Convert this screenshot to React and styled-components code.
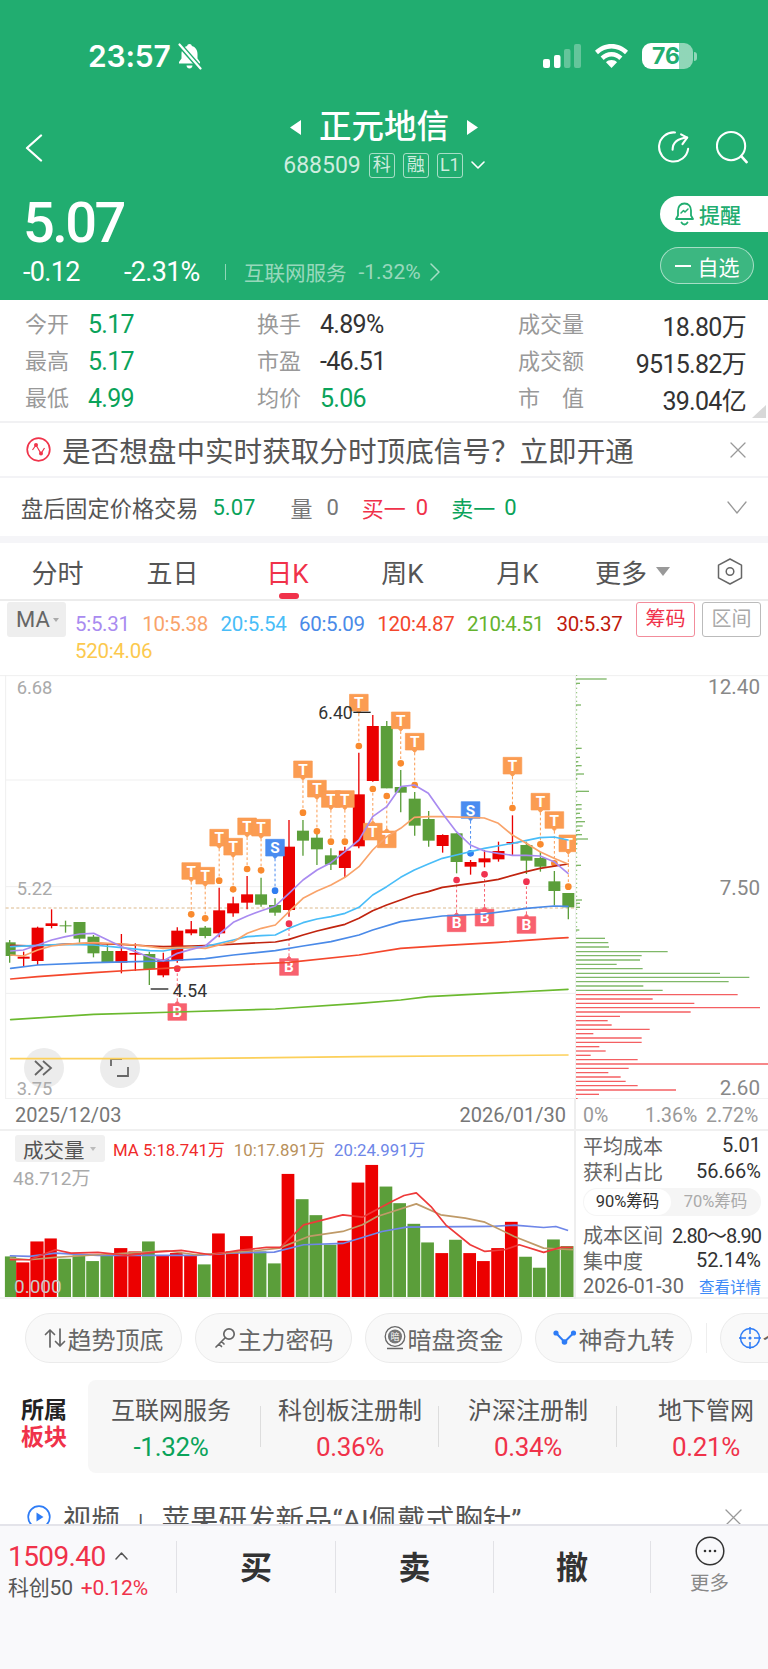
import React from 'react';
import styled, { createGlobalStyle } from 'styled-components';

const GREEN = '#0aa35a';
const RED = '#f0324a';
const CANDLE_RED = '#ea0000';
const CANDLE_GREEN = '#5b9e3a';

const Global = createGlobalStyle`
  html, body { margin: 0; padding: 0; background: #fff; }
  body { font-family: Roboto, "Noto Sans CJK SC", sans-serif; color: #333; }
  * { box-sizing: border-box; }
`;

const Page = styled.div`
  width: 768px; height: 1669px; display: flex; flex-direction: column; overflow: hidden; background: #fff;
`;
const Scroll = styled.div`flex: 1; min-height: 0; overflow: hidden;`;

/* header */
const Header = styled.header`height: 300px; background: #21ad70; color: #fff; display: flex; flex-direction: column;`;
const StatusRow = styled.div`
  margin-top: 41px; height: 30px; padding: 0 71px 0 88px; display: flex; align-items: center; justify-content: space-between;
`;
const TimeGroup = styled.div`display: flex; align-items: center; gap: 6px;`;
const Time = styled.span`font-family: Inter, sans-serif; font-weight: 600; font-size: 30px; letter-spacing: -0.2px;`;
const StatusIcons = styled.div`display: flex; align-items: center; gap: 14px;`;
const BatteryWrap = styled.div`display: flex; align-items: center; gap: 1px;`;
const BatteryBody = styled.div`
  width: 51px; height: 26px; border-radius: 9px; background: linear-gradient(90deg, #fff 72%, rgba(255,255,255,.5) 72%);
  color: #21ad70; font-family: Inter, sans-serif; font-weight: 700; font-size: 23px; line-height: 26px; text-align: center; padding-right: 3px;
`;
const BatteryTip = styled.div`width: 3px; height: 9px; border-radius: 0 3px 3px 0; background: rgba(255,255,255,.5);`;

const NavRow = styled.div`margin-top: 39px; height: 68px; display: grid; grid-template-columns: 110px 1fr 110px;`;
const BackCell = styled.div`padding: 24px 0 0 25px;`;
const TitleCell = styled.div`display: flex; flex-direction: column; align-items: center;`;
const TitleLine = styled.div`display: flex; align-items: center; gap: 18px; height: 34px;`;
const Title = styled.h1`margin: 0; font-size: 32.5px; font-weight: 500; line-height: 34px; letter-spacing: 0;`;
const CodeLine = styled.div`display: flex; align-items: center; height: 26px; margin-top: 8px; color: rgba(255,255,255,.78);`;
const Code = styled.span`font-size: 23px; letter-spacing: 0; margin-right: 8px;`;
const Tag = styled.span`
  width: 26px; height: 25px; border: 1px solid rgba(255,255,255,.6); border-radius: 3px; font-size: 18px; line-height: 22px; text-align: center; margin-right: 8px;
`;
const NavIcons = styled.div`display: flex; justify-content: flex-end; gap: 26px; padding: 20px 20px 0 0;`;

const PriceRow = styled.div`margin-top: 18px; display: flex; justify-content: space-between; flex: 1;`;
const PriceCol = styled.div`padding: 2px 0 0 23px;`;
const BigPrice = styled.div`font-size: 56px; line-height: 50px; font-weight: 500; letter-spacing: -2.6px;`;
const MoveLine = styled.div`display: flex; align-items: center; margin-top: 9px; height: 30px;`;
const Move = styled.span`font-size: 27px; letter-spacing: -.7px; width: ${p => p.$w}px;`;
const MoveSep = styled.span`width: 1px; height: 16px; background: rgba(255,255,255,.5); margin-right: 18px;`;
const Industry = styled.span`font-size: 20.5px; color: rgba(255,255,255,.55); margin-right: 12px;`;
const IndustryVal = styled.span`font-size: 21px; color: rgba(255,255,255,.55); margin-right: 9px;`;
const ActionCol = styled.div`width: 108px; display: flex; flex-direction: column;`;
const AlertBtn = styled.div`
  height: 36px; background: #fff; color: #21ad70; border-radius: 18px 0 0 18px; display: flex; align-items: center; padding-left: 15px; gap: 5px; font-size: 21px; font-weight: 500;
`;
const WatchBtn = styled.div`
  margin-top: 15px; width: 94px; height: 37px; border: 1px solid rgba(255,255,255,.55); border-radius: 18.5px; background: rgba(255,255,255,.12);
  display: flex; align-items: center; justify-content: center; gap: 7px; font-size: 21px;
`;
const Dash = styled.span`width: 16px; height: 2px; background: #fff;`;

/* stats */
const Stats = styled.section`
  position: relative; height: 123px; padding: 5px 22px 0 25px; display: grid; grid-template-columns: 232px 261px 1fr; grid-auto-rows: 37px; border-bottom: 2px solid #f1f1f3;
`;
const StatCell = styled.div`display: flex; align-items: center; justify-content: ${p => (p.$wide ? 'space-between' : 'flex-start')};`;
const StatLabel = styled.span`font-size: 22px; color: #999; margin-top: -4px; width: ${p => (p.$wide ? 'auto' : '63px')};`;
const StatValue = styled.span`font-size: 25px; letter-spacing: -.7px; margin-top: 2px; color: ${p => p.$color || '#333'};`;
const Corner = styled.div`
  position: absolute; right: 2px; bottom: 3px; width: 0; height: 0; border-style: solid; border-width: 0 0 13px 14px; border-color: transparent transparent #d8d8d8 transparent;
`;

/* banners */
const Notice = styled.div`height: 55px; display: flex; align-items: center; padding: 0 22px 0 26px; border-bottom: 2px solid #f3f3f6;`;
const NoticeText = styled.span`flex: 1; font-size: 28.6px; color: #555; margin-left: 11px; white-space: nowrap;`;
const AfterRow = styled.div`height: 58px; display: flex; align-items: center; padding: 0 21px; border-radius: 0 0 6px 6px;`;
const AfterLabel = styled.span`font-size: 22.2px; color: #555;`;
const AfterValue = styled.span`font-size: 22px; color: ${p => p.$color || '#777'}; margin-left: ${p => p.$ml || 0}px;`;
const AfterSpacer = styled.span`flex: 1;`;
const Gap = styled.div`height: 7px; background: #f5f5f8;`;

/* tabs */
const Tabs = styled.nav`height: 58px; display: grid; grid-template-columns: repeat(6, 115px) 1fr; border-bottom: 2px solid #ececec;`;
const Tab = styled.div`
  position: relative; display: flex; align-items: center; justify-content: center; gap: 9px; font-size: 26px; color: ${p => (p.$active ? RED : '#555')};
  &::after { content: ''; display: ${p => (p.$active ? 'block' : 'none')}; position: absolute; left: 50%; margin-left: -9px; bottom: 0; width: 20px; height: 6px; border-radius: 3px; background: ${RED}; }
`;
const Caret = styled.span`
  width: 0; height: 0; border-style: solid; border-width: ${p => p.$s * 0.9}px ${p => p.$s * 0.7}px 0; border-color: ${p => p.$c || '#999'} transparent transparent;
`;
const HexCell = styled.div`display: flex; align-items: center; padding-left: 27px;`;

/* ma row */
const MaRow = styled.div`height: 74px; display: flex; padding: 1px 7px 0;`;
const MaSelect = styled.div`
  width: 59px; height: 35px; border-radius: 3px; background: #eee; display: flex; align-items: center; padding-left: 9px; gap: 3px; font-size: 22px; color: #666; flex: none;
`;
const Legend = styled.div`flex: none; width: 570px; display: flex; flex-wrap: wrap; align-content: flex-start; padding: 9px 0 0 9px; column-gap: 12.5px;`;
const LegendItem = styled.span`font-size: 20.5px; letter-spacing: -.3px; line-height: 27px; color: ${p => p.$c}; white-space: nowrap;`;
const MaBtns = styled.div`display: flex; gap: 7px; flex: none;`;
const MaBtn = styled.div`
  width: 59px; height: 35px; border-radius: 3px; border: 1px solid ${p => (p.$on ? '#f28c9b' : '#bbb')}; color: ${p => (p.$on ? RED : '#aaa')};
  font-size: 20px; line-height: 33px; text-align: center;
`;

/* chart */
const ChartRow = styled.div`position: relative; height: 424px; display: grid; grid-template-columns: 576px 192px;`;
const PriceSvg = styled.svg`display: block; position: relative; z-index: 1;`;
const CircleBtn = styled.div`
  position: absolute; z-index: 0; left: ${p => p.$x - 20}px; top: 373px; width: 40px; height: 40px; border-radius: 50%; background: #ececec; display: flex; align-items: center; justify-content: center;
`;
const AxisText = styled.text`font-size: ${p => p.$s || 55}px; fill: ${p => p.$c || '#aaa'}; dominant-baseline: central;`;
const MarkLetter = styled.text`font-size: 46px; font-weight: 700; fill: #fff; text-anchor: middle; dominant-baseline: central;`;

const DateRow = styled.div`
  height: 32px; display: grid; grid-template-columns: 576px 1fr; border-bottom: 2px solid #f0f0f0; font-size: 20px; color: #777;
`;
const DateLeft = styled.div`display: flex; align-items: center; justify-content: space-between; padding: 2px 8px 0 15px; border-right: 2px solid #eee;`;
const DateRight = styled.div`display: flex; align-items: center; padding: 2px 14px 0 7px; color: #999; font-size: 19.5px;`;
const Pct = styled.span`width: ${p => p.$w}px;`;

const VolRow = styled.div`height: 168px; display: grid; grid-template-columns: 576px 1fr; border-bottom: 2px solid #f3f3f3;`;
const VolPane = styled.div`position: relative; border-right: 2px solid #eee;`;
const VolSvg = styled.svg`display: block;`;
const VolSelect = styled.div`
  position: absolute; left: 15px; top: 4px; width: 90px; height: 27px; background: #f0f0f0; border-radius: 3px; display: flex; align-items: center; padding-left: 8px; gap: 5px; font-size: 20.5px; color: #555;
`;
const VolLegend = styled.div`position: absolute; left: 113px; top: 8px; display: flex; gap: 9px; font-size: 16.8px; line-height: 22px; white-space: nowrap;`;
const VolItem = styled.span`color: ${p => p.$c};`;
const VolMax = styled.div`position: absolute; left: 13px; top: 36px; font-size: 19px; line-height: 24px; color: #aaa;`;
const VolMin = styled.div`position: absolute; left: 14px; top: 144px; font-size: 19px; line-height: 24px; color: #c8c8c8;`;

const CostPane = styled.div`padding: 1px 7px 0 7px; display: flex; flex-direction: column;`;
const CostLine = styled.div`height: 26px; display: flex; align-items: center; justify-content: space-between; font-size: 20px; color: #666; white-space: nowrap;`;
const CostValue = styled.span`color: #333; font-size: 20px; letter-spacing: ${p => p.$ls || 0}px;`;
const CostLink = styled.span`color: #3d8af7; font-size: 15.5px;`;
const Toggle = styled.div`height: 28px; margin: 4px 0 5px; border-radius: 14px; background: #f5f5f5; display: grid; grid-template-columns: 87px 1fr; font-size: 16.5px; text-align: center; line-height: 26px; color: #aaa; padding: 1px;`;
const ToggleOn = styled.div`background: #fff; border-radius: 13px; color: #333;`;
const ToggleOff = styled.div``;

/* pills */
const Pills = styled.div`margin-top: 14px; height: 50px; display: flex; padding-left: 25px; gap: 13px; overflow: hidden;`;
const Pill = styled.div`
  flex: none; width: 157px; height: 50px; border-radius: 25px; border: 1px solid #ebebeb; background: #f9f9f9; display: flex; align-items: center; justify-content: center; gap: 2px; font-size: 24px; color: #666; white-space: nowrap;
`;
const PillDivider = styled.div`flex: none; width: 1px; height: 30px; background: #eee; margin: 10px 0 0 1px;`;

/* sectors */
const SectorRow = styled.div`margin-top: 17px; height: 93px; display: flex;`;
const SectorTitle = styled.div`flex: none; width: 88px; padding: 17px 0 0 21px; font-size: 23px; font-weight: 700; line-height: 27px; color: #222;`;
const SectorRed = styled.div`color: ${RED};`;
const SectorList = styled.div`flex: 1; display: flex; overflow: hidden; background: #f7f7f7; border-radius: 8px 0 0 8px;`;
const SectorCell = styled.div`
  position: relative; flex: none; width: ${p => (p.$first ? 173 : 178)}px; padding: 16px ${p => (p.$first ? 7 : 0)}px 0 0; text-align: center;
  &::after { content: ''; position: absolute; right: 0; top: 26px; height: 41px; width: 1px; background: #ddd; }
`;
const SectorName = styled.div`font-size: 24px; line-height: 30px; color: #555; white-space: nowrap;`;
const SectorVal = styled.div`font-size: 26px; letter-spacing: -.3px; line-height: 30px; margin-top: 6px; color: ${p => p.$c};`;

/* video */
const VideoRow = styled.div`margin-top: 24px; height: 40px; display: flex; align-items: center; padding: 0 26px 0 27px;`;
const VideoText = styled.span`flex: 1; font-size: 28.5px; color: #555; margin-left: 12px; white-space: nowrap;`;
const VideoSep = styled.span`font-size: 22px; margin: 0 18px; color: #555;`;

/* bottom */
const Bottom = styled.footer`flex: none; height: 145px; background: #f9f9fb; border-top: 2px solid #e4e4ea; padding-top: 15px; display: grid; grid-template-columns: 176px 159px 158px 157px 1fr; grid-auto-rows: 52px;`;
const IndexCell = styled.div`padding-left: 8px; display: flex; flex-direction: column;`;
const IndexTop = styled.div`display: flex; align-items: center; gap: 9px; height: 32px; margin-top: -1px;`;
const IndexPrice = styled.span`font-size: 28px; letter-spacing: -.6px; color: ${RED};`;
const IndexBottom = styled.div`display: flex; gap: 8px; margin-top: 3px; font-size: 21px; letter-spacing: -.2px; line-height: 26px; color: #555; white-space: nowrap;`;
const IndexChange = styled.span`color: ${RED};`;
const TradeBtn = styled.div`border-left: 1px solid #e2e2e6; padding-bottom: 5px; display: flex; align-items: center; justify-content: center; font-size: 32px; font-weight: 700; color: #333;`;
const MoreBtn = styled.div`border-left: 1px solid #e2e2e6; display: flex; flex-direction: column; align-items: center; font-size: 19.5px; color: #888; height: 52px;`;
const MoreIcon = styled.div`height: 30px; margin-top: -5px;`;
const MoreText = styled.span`line-height: 24px; margin-top: 6px;`;

/* chart data, in 3x chart coordinates */
const px = i => 29 + 41.9 * i;
const C = [
  ['g',817,858,810,878],['r',860,866,845,888],['r',773,873,770,885],['r',760,768,718,775],['g',766,769,752,788],
  ['g',756,806,756,818],['g',800,850,795,862],['g',843,876,820,878],['r',843,878,792,910],['r',849,854,820,903],
  ['g',852,898,845,945],['r',868,916,848,922],['r',782,872,772,878],['r',778,790,753,796],['g',773,798,768,805],
  ['r',721,790,653,802],['r',700,730,680,740],['r',673,698,618,718],['g',673,704,623,710],['g',705,728,685,737],
  ['r',530,720,450,740],['g',482,512,450,557],['g',503,538,478,585],['g',556,584,535,600],['r',542,594,530,622],
  ['r',373,529,248,535],['r',168,333,135,335],['g',168,355,153,355],['g',351,368,300,427],['g',386,467,366,497],
  ['g',447,512,423,530],['r',495,528,493,548],['g',490,576,490,610],['r',576,590,570,614],['r',565,577,540,592],
  ['r',543,568,515,575],['r',516,520,436,555],['g',525,572,515,612],['g',564,590,545,605],['g',634,663,603,706],
  ['g',669,712,669,748],
];
const TOP_MARKS = [
  [13,'T',578,733],[14,'T',592,745],[15,'T',478,632],[16,'T',505,658],[17,'T',444,597],[18,'T',448,601],[19,'S',508,662],
  [21,'T',273,428],[22,'T',331,484],[23,'T',362,515],[24,'T',362,515],[25,'T',73,228],[28,'T',126,280],[29,'T',190,345],
  [33,'S',395,550],[36,'T',262,414],[38,'T',370,523],[39,'T',425,580],[40,'T',495,650],
];
const BELOW_MARKS = [
  [26,'T',452,357],[27,'T',475,378],[12,'B',993,896],[20,'B',858,761],[32,'B',727,630],[34,'B',710,613],[37,'B',732,635],
];
const MC = {
  T: ['#fb9c52', '#f98a2e'], S: ['#4a8cf0', '#2f7df0'], B: ['#f8616f', '#f0324f'],
};
const LINES = [
  ['#fcd05a', 5, [[32,1166],[532,1166],[1077,1160],[1704,1155]]],
  ['#6bb92f', 5, [[32,1049],[281,1033],[532,1026],[826,1017],[1077,1000],[1202,990],[1285,980],[1704,958]]],
  ['#f4472c', 5, [[32,927],[113,920],[281,908],[407,900],[532,893],[700,885],[867,877],[1077,855],[1202,835],[1327,827],[1495,817],[1662,805],[1704,803]]],
  ['#4a8ae8', 5, [[32,895],[113,885],[281,878],[407,875],[490,873],[616,866],[700,855],[826,842],[909,828],[993,815],[1077,795],[1118,780],[1202,755],[1327,738],[1453,732],[1579,715],[1662,708],[1704,709]]],
  ['#c0240f', 5, [[32,826],[113,828],[197,822],[281,820],[365,823],[449,828],[490,830],[574,828],[658,825],[742,820],[826,816],[867,808],[909,795],[951,783],[993,773],[1035,763],[1077,745],[1118,722],[1160,705],[1202,690],[1243,675],[1285,665],[1327,652],[1453,635],[1495,628],[1579,605],[1620,595],[1704,582]]],
  ['#49bdf8', 5, [[32,830],[113,826],[197,823],[281,825],[365,833],[449,842],[490,843],[532,835],[616,830],[700,810],[742,800],[784,797],[826,795],[867,775],[909,758],[951,747],[993,740],[1035,730],[1077,712],[1118,675],[1160,650],[1202,622],[1243,600],[1285,582],[1327,565],[1369,555],[1453,535],[1537,520],[1620,503],[1662,501],[1704,510]]],
  ['#f9a36a', 5, [[32,855],[70,858],[113,840],[155,828],[197,823],[239,820],[281,818],[323,820],[365,822],[407,825],[449,830],[490,835],[532,833],[574,832],[616,835],[658,825],[700,815],[742,790],[784,775],[826,765],[867,725],[909,685],[951,663],[993,645],[1035,622],[1077,590],[1118,540],[1160,500],[1202,475],[1243,442],[1285,440],[1327,440],[1411,442],[1453,444],[1495,460],[1537,495],[1579,520],[1620,545],[1662,565],[1704,582]]],
  ['#a98bf0', 5, [[32,843],[70,840],[113,825],[155,810],[197,800],[239,792],[281,790],[323,810],[365,830],[407,845],[449,862],[490,872],[532,850],[574,838],[616,828],[658,792],[700,757],[742,738],[784,722],[826,708],[867,670],[909,630],[951,600],[993,578],[1035,545],[1077,510],[1118,440],[1160,410],[1202,350],[1243,345],[1285,370],[1327,430],[1369,485],[1411,525],[1453,543],[1495,550],[1537,556],[1579,556],[1620,558],[1662,575],[1704,610]]],
];
const DIST_G = [[27,980],[40,900],[105,903],[235,905],[262,900],[275,895],[287,905],[300,895],[312,912],[325,892],[364,927],[404,905],[417,905],[430,900],[443,905],[455,915],[468,908],[481,900],[494,906],[507,924],[520,892],[586,903],[690,906],[700,900],[712,900],[780,898],[805,975],[818,985],[831,987],[845,1163],[857,1085],[870,1080],[883,1010],[896,1088],[910,1320],[922,1408],[935,1346],[948,1090],[961,1148]];
const DIST_R = [[974,1373],[987,1118],[1000,1243],[1013,1440],[1026,1232],[1039,1020],[1052,983],[1065,995],[1078,1109],[1091,940],[1104,1085],[1117,1085],[1130,958],[1143,977],[1156,932],[1169,1073],[1182,1464],[1195,1046],[1208,985],[1221,1022],[1234,1037],[1247,1073],[1260,1188],[1273,957],[1286,893]];
const VOL = [
  [10,33,500,'g'],[33,60,518,'r'],[62,89,455,'r'],[91,116,446,'r'],[119,145,507,'g'],[148,174,497,'g'],[176,202,514,'g'],[205,231,497,'g'],[233,260,475,'r'],[262,288,485,'r'],
  [290,316,455,'g'],[319,345,497,'r'],[347,373,490,'r'],[376,402,497,'r'],[404,430,524,'g'],[433,459,431,'r'],[461,487,485,'r'],[490,516,439,'r'],[518,544,485,'g'],[547,573,521,'g'],
  [575,601,252,'r'],[604,630,328,'g'],[632,658,376,'g'],[661,687,465,'g'],[689,715,453,'r'],[718,744,278,'r'],[746,772,225,'r'],[775,801,290,'g'],[803,829,340,'g'],[832,858,402,'g'],
  [860,886,458,'g'],[889,915,490,'r'],[917,943,450,'g'],[946,972,490,'r'],[974,1000,514,'r'],[1003,1029,475,'r'],[1031,1057,396,'r'],[1060,1086,501,'g'],[1088,1114,534,'g'],[1117,1143,449,'g'],[1145,1171,469,'g'],
];
const VOL_LINES = [
  ['#6e86e8', [[20,498],[60,500],[113,490],[200,497],[300,497],[400,497],[470,490],[560,487],[620,465],[700,461],[780,425],[830,412],[1000,410],[1050,406],[1110,413],[1135,410],[1160,422]]],
  ['#bf9a68', [[20,505],[60,510],[113,503],[200,495],[260,490],[340,483],[400,495],[460,490],[520,483],[570,475],[630,440],[700,425],[740,405],[770,380],[850,342],[900,375],[950,385],[990,397],[1050,440],[1110,475],[1170,480]]],
  ['#ee3a3a', [[20,510],[60,510],[113,480],[145,490],[200,488],[260,497],[316,487],[370,482],[430,495],[487,482],[544,473],[573,473],[620,405],[660,390],[700,375],[740,382],[800,335],[825,317],[850,309],[880,350],[910,405],[960,465],[990,485],[1030,480],[1060,465],[1110,488],[1145,473],[1170,473]]],
];

const Marker = ({ m, below }) => {
  const [i, kind, top, dot] = m;
  const x = px(i);
  const [fill, dotFill] = MC[kind];
  const y1 = below ? top : top + 58;
  const shape = below
    ? `M${x - 28} ${top + 8} H${x - 8} L${x} ${top} L${x + 8} ${top + 8} H${x + 28} V${top + 58} H${x - 28} Z`
    : `M${x - 28} ${top} H${x + 28} V${top + 50} H${x + 8} L${x} ${top + 58} L${x - 8} ${top + 50} H${x - 28} Z`;
  return (
    <g>
      <line x1={x} x2={x} y1={y1} y2={dot} stroke={fill} strokeWidth="3" strokeDasharray="8 7" />
      <circle cx={x} cy={dot} r="10" fill={dotFill} />
      <path d={shape} fill={fill} stroke={fill} strokeWidth="2" strokeLinejoin="round" />
      <MarkLetter x={x} y={below ? top + 33 : top + 27}>{kind}</MarkLetter>
    </g>
  );
};

const PriceChart = () => (
  <PriceSvg width="576" height="424" viewBox="0 15 1728 1272">
    <g stroke="#efefef" strokeWidth="3">
      <line x1="0" x2="1728" y1="17" y2="17" />
      <line x1="17" x2="17" y1="15" y2="1287" />
      {[330, 650, 970, 1286].map(y => <line key={y} x1="17" x2="1728" y1={y} y2={y} />)}
      <line x1="1727" x2="1727" y1="15" y2="1287" />
    </g>
    <line x1="17" x2="1728" y1="714" y2="714" stroke="#dcb98c" strokeWidth="3" strokeDasharray="9 7" />
    {C.map((c, i) => {
      const x = px(i);
      const col = c[0] === 'r' ? CANDLE_RED : CANDLE_GREEN;
      const bx = Math.max(17, x - 18);
      return (
        <g key={i}>
          <line x1={x} x2={x} y1={c[3]} y2={c[4]} stroke={col} strokeWidth="4" />
          <rect x={bx} y={c[1]} width={x + 18 - bx} height={c[2] - c[1]} fill={col} />
        </g>
      );
    })}
    {TOP_MARKS.map((m, i) => <Marker key={i} m={m} />)}
    {BELOW_MARKS.map((m, i) => <Marker key={i} m={m} below />)}
    {LINES.map((l, i) => (
      <polyline key={i} points={l[2].map(p => p.join(',')).join(' ')} fill="none" stroke={l[0]} strokeWidth={l[1]} strokeLinejoin="round" strokeLinecap="round" />
    ))}
    <AxisText x="50" y="52">6.68</AxisText>
    <AxisText x="50" y="655">5.22</AxisText>
    <AxisText x="50" y="1254">3.75</AxisText>
    <AxisText x="955" y="130" $c="#333" $s="53">6.40</AxisText>
    <line x1="1060" x2="1112" y1="127" y2="127" stroke="#222" strokeWidth="4" />
    <line x1="452" x2="505" y1="957" y2="957" stroke="#222" strokeWidth="4" />
    <AxisText x="518" y="962" $c="#333" $s="53">4.54</AxisText>
  </PriceSvg>
);

const DistChart = () => (
  <PriceSvg width="192" height="424" viewBox="888 15 576 1272">
    <line x1="888" x2="1464" y1="17" y2="17" stroke="#efefef" strokeWidth="3" />
    <line x1="888" x2="1464" y1="1286" y2="1286" stroke="#efefef" strokeWidth="3" />
    <g stroke="#6db24f" strokeWidth="3" strokeDasharray="4 9" opacity=".8">
      <line x1="890" x2="890" y1="14" y2="795" />
    </g>
    {DIST_G.map(([y, e], i) => <line key={i} x1="888" x2={e} y1={y} y2={y} stroke="#7fb868" strokeWidth="4" />)}
    {DIST_R.map(([y, e], i) => <line key={i} x1="888" x2={e} y1={y} y2={y} stroke="#f45f62" strokeWidth="4" />)}
    <AxisText x="1440" y="50" $c="#888" $s="62" textAnchor="end">12.40</AxisText>
    <AxisText x="1440" y="653" $c="#888" $s="62" textAnchor="end">7.50</AxisText>
    <AxisText x="1440" y="1255" $c="#888" $s="62" textAnchor="end">2.60</AxisText>
  </PriceSvg>
);

const VolChart = () => (
  <VolSvg width="574" height="166" viewBox="0 123 1172 499" preserveAspectRatio="none">
    {VOL.map(([a, b, t, c], i) => (
      <rect key={i} x={a} y={t} width={b - a} height={628 - t} fill={c === 'r' ? '#ec0000' : CANDLE_GREEN} />
    ))}
    {VOL_LINES.map((l, i) => (
      <polyline key={i} points={l[1].map(p => p.join(',')).join(' ')} fill="none" stroke={l[0]} strokeWidth="1.7" vectorEffect="non-scaling-stroke" strokeLinejoin="round" />
    ))}
  </VolSvg>
);

const BellSlash = () => (
  <svg width="25" height="27" viewBox="0 0 25 27" fill="#fff">
    <path d="M12.5 1c1.3 0 2.2 .9 2.4 2 3.6 1 5.6 4 5.6 8v4.5l2.5 3.5v1.5H2V19l2.5-3.5V11c0-4 2-7 5.6-8 .2-1.100 1.100-2 2.400-2z" />
    <path d="M9.500 22.500h6c-.2 1.800-1.400 3-3 3s-2.800-1.200-3-3z" />
    <path d="M2 1 L23.500 25.500" stroke="#21ad70" strokeWidth="5" />
    <path d="M2.500 1.500 L23.500 25.500" stroke="#fff" strokeWidth="2.200" strokeLinecap="round" />
  </svg>
);
const Signal = () => (
  <svg width="38" height="24" viewBox="0 0 38 24" fill="#fff">
    <rect x="0" y="15" width="7" height="9" rx="2" />
    <rect x="11" y="11" width="6.500" height="13" rx="2" />
    <rect x="21" y="5" width="6.500" height="19" rx="2" opacity=".3" />
    <rect x="31" y="0" width="7" height="24" rx="2" opacity=".3" />
  </svg>
);
const Wifi = () => (
  <svg width="33" height="24" viewBox="0 0 33 24" fill="#fff">
    <path d="M16.500 0C10 0 4.500 2.500 0 6.800l3 3.400C6.700 6.600 11.200 4.500 16.500 4.500s9.800 2.100 13.500 5.700l3-3.400C28.500 2.500 23 0 16.500 0z" />
    <path d="M16.500 8c-4.300 0-8 1.700-10.900 4.600l3.100 3.400c2.100-2.100 4.800-3.400 7.800-3.400s5.700 1.300 7.800 3.400l3.100-3.400C24.500 9.700 20.800 8 16.500 8z" />
    <path d="M16.500 16c-2.300 0-4.200 .9-5.500 2.200l5.500 5.800 5.500-5.800c-1.300-1.300-3.200-2.200-5.500-2.200z" />
  </svg>
);
const Back = () => (
  <svg width="18" height="28" viewBox="0 0 18 28" fill="none" stroke="#fff" strokeWidth="2.300" strokeLinecap="round" strokeLinejoin="round"><path d="M16 1.500 L2 14 L16 26.500" /></svg>
);
const Tri = ({ dir }) => (
  <svg width="11" height="15" viewBox="0 0 11 15" fill="#fff"><path d={dir === 'l' ? 'M11 0 V15 L0 7.500 Z' : 'M0 0 V15 L11 7.500 Z'} /></svg>
);
const Chevron = ({ w = 14, h = 8, c = '#fff', sw = 1.600 }) => (
  <svg width={w} height={h} viewBox={`0 0 ${w} ${h}`} fill="none" stroke={c} strokeWidth={sw} strokeLinecap="round" strokeLinejoin="round"><path d={`M1 1 L${w / 2} ${h - 1} L${w - 1} 1`} /></svg>
);
const Refresh = () => (
  <svg width="34" height="34" viewBox="0 0 34 34" fill="none" stroke="#fff" strokeWidth="2.200" strokeLinecap="round" strokeLinejoin="round">
    <path d="M18 1.500 A15.500 15.500 0 1 0 32 19" />
    <path d="M15.500 20 C15.500 12 21 8 31 7" />
    <path d="M24.500 3.500 L31 7 L26 14" />
  </svg>
);
const Search = () => (
  <svg width="34" height="34" viewBox="0 0 34 34" fill="none" stroke="#fff" strokeWidth="2.200" strokeLinecap="round">
    <circle cx="16" cy="16" r="15" />
    <path d="M27 27 L32.500 33" strokeWidth="2.800" />
  </svg>
);
const AlertBell = () => (
  <svg width="19" height="24" viewBox="0 0 19 24" fill="none" stroke="#21ad70" strokeWidth="1.800" strokeLinejoin="round" strokeLinecap="round">
    <path d="M9.500 1.500c4.300 0 6.500 3.200 6.500 7v5l2 3.500H1l2-3.500v-5c0-3.800 2.200-7 6.500-7z" />
    <path d="M6.500 20.500c.7 1.300 1.700 2 3 2s2.300-.7 3-2" />
    <path d="M6 11 L8.500 8.500 L10 10 L13 7" strokeWidth="1.500" />
  </svg>
);
const Arrow = ({ w, h, c = '#999', sw = 1.400, up }) => (
  <svg width={w} height={h} viewBox={`0 0 ${w} ${h}`} fill="none" stroke={c} strokeWidth={sw} strokeLinecap="round" strokeLinejoin="round"><path d={up ? `M1 ${h - 1} L${w / 2} 1 L${w - 1} ${h - 1}` : `M1 1 L${w - 1} ${h / 2} L1 ${h - 1}`} /></svg>
);
const Close = ({ s = 16, c = '#999' }) => (
  <svg width={s} height={s} viewBox={`0 0 ${s} ${s}`} stroke={c} strokeWidth="1.300" strokeLinecap="round"><path d={`M1 1 L${s - 1} ${s - 1} M${s - 1} 1 L1 ${s - 1}`} /></svg>
);
const Signals = () => (
  <svg width="25" height="25" viewBox="0 0 25 25" fill="none" stroke="#f0344b">
    <circle cx="12.500" cy="12.500" r="11.300" strokeWidth="1.700" />
    <path d="M6.500 13 L10 8 L15 16.500 L18.500 11" strokeWidth="1.200" />
    <circle cx="10" cy="8" r="2" fill="#f0344b" stroke="none" />
    <circle cx="15" cy="16.500" r="2" fill="#f0344b" stroke="none" />
  </svg>
);
const Hex = () => (
  <svg width="26" height="27" viewBox="0 0 26 27" fill="none" stroke="#666" strokeWidth="1.500" strokeLinejoin="round">
    <path d="M13 1 L24.500 7.200 V19.800 L13 26 L1.500 19.800 V7.200 Z" />
    <circle cx="13" cy="13.500" r="3.800" />
  </svg>
);
const Trend = () => (
  <svg width="22" height="20" viewBox="0 0 22 20" fill="none" stroke="#666" strokeWidth="1.700" strokeLinecap="round" strokeLinejoin="round">
    <path d="M6 19 V2 M1.500 6.500 L6 2 L10.500 6.500" />
    <path d="M16 1 V18 M11.500 13.500 L16 18 L20.500 13.500" />
  </svg>
);
const Key = () => (
  <svg width="22" height="22" viewBox="0 0 22 22" fill="none" stroke="#666" strokeWidth="1.700" strokeLinecap="round">
    <circle cx="15" cy="7" r="5.200" />
    <path d="M11 11 L2 20 M5 17 L7.500 19.500 M7.500 14.500 L10 17" />
  </svg>
);
const DarkPool = () => (
  <svg width="22" height="24" viewBox="0 0 22 24" fill="none" stroke="#666" strokeWidth="1.300">
    <circle cx="11" cy="10.500" r="9.800" />
    <circle cx="11" cy="10.500" r="7" fill="#777" stroke="none" />
    <text x="11" y="14" fontSize="9" fill="#fff" stroke="none" textAnchor="middle">暗</text>
    <path d="M3 22.500 H19" strokeWidth="1.500" />
  </svg>
);
const Nine = () => (
  <svg width="24" height="20" viewBox="0 0 24 20" fill="none" stroke="#2e7cf6" strokeWidth="2" strokeLinecap="round">
    <path d="M3 5 L11.500 14 L20.500 5" />
    <circle cx="3" cy="5" r="2.600" fill="#2e7cf6" stroke="none" />
    <circle cx="11.500" cy="14" r="2.800" fill="#2e7cf6" stroke="none" />
    <circle cx="20.500" cy="5" r="2.600" fill="#2e7cf6" stroke="none" />
  </svg>
);
const Radar = () => (
  <svg width="22" height="22" viewBox="0 0 22 22" fill="none" stroke="#2e7cf6" strokeWidth="1.500">
    <circle cx="11" cy="11" r="9.500" />
    <path d="M11 0 V7 M11 15 V22 M0 11 H7 M15 11 H22" />
    <circle cx="11" cy="11" r="1.600" fill="#2e7cf6" stroke="none" />
  </svg>
);
const Play = () => (
  <svg width="24" height="24" viewBox="0 0 24 24" fill="none" stroke="#2e7cf6" strokeWidth="1.700">
    <circle cx="12" cy="12" r="10.800" />
    <path d="M9.500 7.500 L16.500 12 L9.500 16.500 Z" fill="#2e7cf6" stroke="none" />
  </svg>
);
const MoreCircle = () => (
  <svg width="30" height="30" viewBox="0 0 30 30" fill="none" stroke="#333" strokeWidth="1.500">
    <circle cx="15" cy="15" r="13.800" />
    <g fill="#333" stroke="none"><circle cx="10" cy="15" r="1.300" /><circle cx="15" cy="15" r="1.300" /><circle cx="20" cy="15" r="1.300" /></g>
  </svg>
);
const DoubleRight = () => (
  <svg width="20" height="16" viewBox="0 0 20 16" fill="none" stroke="#666" strokeWidth="1.800"><path d="M1 1 L8.500 8 L1 15 M9 1 L17 8 L9 15" /></svg>
);
const Expand = () => (
  <svg width="20" height="20" viewBox="0 0 20 20" fill="none" stroke="#666" strokeWidth="1.800"><path d="M1 8 V1 H12 M18 9 V18 H7" /></svg>
);

const STATS = [
  ['今开', '5.17', GREEN, '换手', '4.89%', null, '成交量', '18.80万'],
  ['最高', '5.17', GREEN, '市盈', '-46.51', null, '成交额', '9515.82万'],
  ['最低', '4.99', GREEN, '均价', '5.06', GREEN, '市　值', '39.04亿'],
];
const MAS = [
  ['5:5.31', '#a98bf0'], ['10:5.38', '#f9a36a'], ['20:5.54', '#49bdf8'], ['60:5.09', '#4a8ae8'],
  ['120:4.87', '#f4472c'], ['210:4.51', '#65b32e'], ['30:5.37', '#bf1a0c'], ['520:4.06', '#fcc94e'],
];
const SECTORS = [
  ['互联网服务', '-1.32%', GREEN], ['科创板注册制', '0.36%', RED], ['沪深注册制', '0.34%', RED], ['地下管网', '0.21%', RED],
];

export default function App() {
  return (
    <Page>
      <Global />
      <Scroll>
        <Header>
          <StatusRow>
            <TimeGroup><Time>23:57</Time><BellSlash /></TimeGroup>
            <StatusIcons>
              <Signal />
              <Wifi />
              <BatteryWrap><BatteryBody>76</BatteryBody><BatteryTip /></BatteryWrap>
            </StatusIcons>
          </StatusRow>
          <NavRow>
            <BackCell><Back /></BackCell>
            <TitleCell>
              <TitleLine><Tri dir="l" /><Title>正元地信</Title><Tri dir="r" /></TitleLine>
              <CodeLine>
                <Code>688509</Code><Tag>科</Tag><Tag>融</Tag><Tag>L1</Tag>
                <Chevron />
              </CodeLine>
            </TitleCell>
            <NavIcons><Refresh /><Search /></NavIcons>
          </NavRow>
          <PriceRow>
            <PriceCol>
              <BigPrice>5.07</BigPrice>
              <MoveLine>
                <Move $w={101}>-0.12</Move>
                <Move $w={101}>-2.31%</Move>
                <MoveSep />
                <Industry>互联网服务</Industry>
                <IndustryVal>-1.32%</IndustryVal>
                <Arrow w={10} h={18} c="rgba(255,255,255,.6)" sw={1.500} />
              </MoveLine>
            </PriceCol>
            <ActionCol>
              <AlertBtn><AlertBell />提醒</AlertBtn>
              <WatchBtn><Dash />自选</WatchBtn>
            </ActionCol>
          </PriceRow>
        </Header>

        <Stats>
          {STATS.flatMap((r, i) => [
            <StatCell key={`a${i}`}><StatLabel>{r[0]}</StatLabel><StatValue $color={r[2]}>{r[1]}</StatValue></StatCell>,
            <StatCell key={`b${i}`}><StatLabel>{r[3]}</StatLabel><StatValue $color={r[5]}>{r[4]}</StatValue></StatCell>,
            <StatCell key={`c${i}`} $wide><StatLabel $wide>{r[6]}</StatLabel><StatValue>{r[7]}</StatValue></StatCell>,
          ])}
          <Corner />
        </Stats>

        <Notice>
          <Signals />
          <NoticeText>是否想盘中实时获取分时顶底信号？立即开通</NoticeText>
          <Close />
        </Notice>
        <AfterRow>
          <AfterLabel>盘后固定价格交易</AfterLabel>
          <AfterValue $color={GREEN} $ml={14}>5.07</AfterValue>
          <AfterValue $ml={35}>量</AfterValue>
          <AfterValue $ml={14}>0</AfterValue>
          <AfterValue $color={RED} $ml={23}>买一</AfterValue>
          <AfterValue $color={RED} $ml={10}>0</AfterValue>
          <AfterValue $color={GREEN} $ml={23}>卖一</AfterValue>
          <AfterValue $color={GREEN} $ml={9}>0</AfterValue>
          <AfterSpacer />
          <Chevron w={20} h={13} c="#999" sw={1.300} />
        </AfterRow>
        <Gap />

        <Tabs>
          <Tab>分时</Tab>
          <Tab>五日</Tab>
          <Tab $active>日K</Tab>
          <Tab>周K</Tab>
          <Tab>月K</Tab>
          <Tab>更多<Caret $s={10} /></Tab>
          <HexCell><Hex /></HexCell>
        </Tabs>

        <MaRow>
          <MaSelect>MA<Caret $s={5} $c="#aaa" /></MaSelect>
          <Legend>
            {MAS.map(m => <LegendItem key={m[0]} $c={m[1]}>{m[0]}</LegendItem>)}
          </Legend>
          <MaBtns><MaBtn $on>筹码</MaBtn><MaBtn>区间</MaBtn></MaBtns>
        </MaRow>

        <ChartRow>
          <CircleBtn $x={44}><DoubleRight /></CircleBtn>
          <CircleBtn $x={120}><Expand /></CircleBtn>
          <PriceChart />
          <DistChart />
        </ChartRow>

        <DateRow>
          <DateLeft><span>2025/12/03</span><span>2026/01/30</span></DateLeft>
          <DateRight><Pct $w={62}>0%</Pct><Pct $w={61}>1.36%</Pct><Pct $w={50}>2.72%</Pct></DateRight>
        </DateRow>

        <VolRow>
          <VolPane>
            <VolChart />
            <VolSelect>成交量<Caret $s={5} $c="#bbb" /></VolSelect>
            <VolLegend>
              <VolItem $c="#f02a2a">MA 5:18.741万</VolItem>
              <VolItem $c="#b8905a">10:17.891万</VolItem>
              <VolItem $c="#6e86e8">20:24.991万</VolItem>
            </VolLegend>
            <VolMax>48.712万</VolMax>
            <VolMin>0.000</VolMin>
          </VolPane>
          <CostPane>
            <CostLine>平均成本<CostValue>5.01</CostValue></CostLine>
            <CostLine>获利占比<CostValue>56.66%</CostValue></CostLine>
            <Toggle><ToggleOn>90%筹码</ToggleOn><ToggleOff>70%筹码</ToggleOff></Toggle>
            <CostLine>成本区间<CostValue $ls={-1}>2.80～8.90</CostValue></CostLine>
            <CostLine>集中度<CostValue>52.14%</CostValue></CostLine>
            <CostLine>2026-01-30<CostLink>查看详情</CostLink></CostLine>
          </CostPane>
        </VolRow>

        <Pills>
          <Pill><Trend />趋势顶底</Pill>
          <Pill><Key />主力密码</Pill>
          <Pill><DarkPool />暗盘资金</Pill>
          <Pill><Nine />神奇九转</Pill>
          <PillDivider />
          <Pill><Radar />个股雷达</Pill>
        </Pills>

        <SectorRow>
          <SectorTitle>所属<SectorRed>板块</SectorRed></SectorTitle>
          <SectorList>
            {SECTORS.map((s, i) => (
              <SectorCell key={s[0]} $first={i === 0}>
                <SectorName>{s[0]}</SectorName>
                <SectorVal $c={s[2]}>{s[1]}</SectorVal>
              </SectorCell>
            ))}
          </SectorList>
        </SectorRow>

        <VideoRow>
          <Play />
          <VideoText>视频<VideoSep>|</VideoSep>苹果研发新品“AI佩戴式胸针”</VideoText>
          <Close s={17} />
        </VideoRow>
      </Scroll>

      <Bottom>
        <IndexCell>
          <IndexTop><IndexPrice>1509.40</IndexPrice><Arrow w={13} h={8} c="#555" sw={1.500} up /></IndexTop>
          <IndexBottom>科创50<IndexChange>+0.12%</IndexChange></IndexBottom>
        </IndexCell>
        <TradeBtn>买</TradeBtn>
        <TradeBtn>卖</TradeBtn>
        <TradeBtn>撤</TradeBtn>
        <MoreBtn><MoreIcon><MoreCircle /></MoreIcon><MoreText>更多</MoreText></MoreBtn>
      </Bottom>
    </Page>
  );
}
